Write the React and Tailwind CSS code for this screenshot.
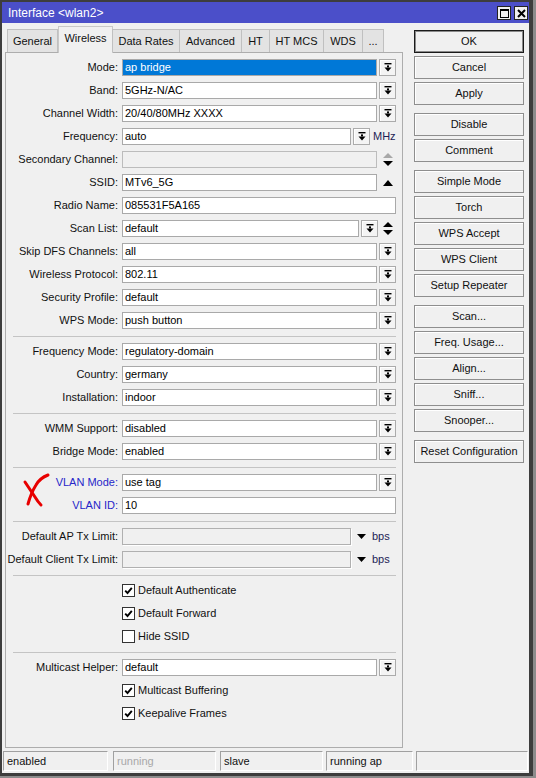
import React from "react";

const DropIcon = () => (
    <svg width="8" height="9" viewBox="0 0 8 9">
        <rect x="0.5" y="0" width="7" height="1.4" fill="#000" />
        <rect x="3" y="2.4" width="2" height="2" fill="#000" />
        <polygon points="0.5,4.4 7.5,4.4 4,8.4" fill="#000" />
    </svg>
);

const UpDown = ({ upColor = "#000" }) => (
    <svg width="10" height="13" viewBox="0 0 10 13">
        <polygon points="0,5 10,5 5,0" fill={upColor} />
        <polygon points="0,8 10,8 5,13" fill="#000" />
    </svg>
);

const Check = ({ on }) => (
    <div className="w-[13px] h-[13px] bg-white border border-[#333] flex items-center justify-center">
        {on && (
            <svg width="9" height="9" viewBox="0 0 9 9">
                <path d="M1.2 4.6 L3.5 7 L7.8 1.8" stroke="#000" strokeWidth="1.9" fill="none" />
            </svg>
        )}
    </div>
);

const Row = ({ label, blue, children }) => (
    <div className="flex items-center h-[23px]">
        <div className={`w-[116px] pr-[4px] text-right whitespace-nowrap ${blue ? "text-[#2626c9]" : "text-[#111]"}`}>
            {label}:
        </div>
        {children}
    </div>
);

const Drop = () => (
    <div className="ml-[2px] w-[17px] h-[17px] border border-[#ababab] bg-[#f4f4f4] shadow-[inset_1px_1px_0_#fff] flex items-center justify-center">
        <DropIcon />
    </div>
);

const Select = ({ value, sel }) => (
    <>
        <div className={`w-[255px] h-[17px] border border-[#a9a9a9] flex items-center px-[2px] ${sel ? "bg-[#0078d7] text-white" : "bg-white"}`}>
            {value}
        </div>
        <Drop />
    </>
);

const Separator = () => (
    <div className="mt-[4px] mb-[3px] ml-[7px] mr-[6px] border-t border-[#c4c4c4]" />
);

const CheckRow = ({ label, on }) => (
    <div className="flex items-center h-[23px]">
        <div className="w-[116px]" />
        <Check on={on} />
        <span className="ml-[3px] text-[#111]">{label}</span>
    </div>
);

const Btn = ({ children, primary, extra }) => (
    <div
        className={`h-[23px] flex items-center justify-center text-[#111] bg-[#f0f0f0] ${extra ? "mt-[8px]" : "mt-[3px]"} ${
            primary
                ? "border border-[#1a1a1a] shadow-[inset_0_0_0_1px_#8a8a8a]"
                : "border border-[#8e8e8e] shadow-[inset_1px_1px_0_#fff]"
        }`}
    >
        {children}
    </div>
);

const tabs = [
    { name: "General", w: "w-[51px]" },
    { name: "Wireless", w: "w-[55px]", active: true },
    { name: "Data Rates", w: "w-[68px]" },
    { name: "Advanced", w: "w-[63px]" },
    { name: "HT", w: "w-[29px]" },
    { name: "HT MCS", w: "w-[55px]" },
    { name: "WDS", w: "w-[40px]" },
    { name: "...", w: "w-[22px]" },
];

const status = [
    { text: "enabled", w: "w-[105px] ml-[1px]" },
    { text: "running", w: "w-[103px] ml-[5px]", dim: true },
    { text: "slave", w: "w-[103px] ml-[4px]" },
    { text: "running ap", w: "w-[87px] ml-[3px]" },
    { text: "", w: "w-[112px] ml-[3px]" },
];

export default function App() {
    return (
        <div className="w-[536px] h-[778px] bg-[#8c8c8c] font-['Liberation_Sans',Arial,sans-serif] text-[11px] leading-none">
            <div className="w-[533px] bg-[#f0f0f0] border-l-2 border-t-2 border-r-[4px] border-b-[3px] border-[#3d3d3d]">
                {/* title bar */}
                <div className="h-[21px] bg-[#4b4fc9] flex items-center pl-[6px] pr-[1px] pt-[1px]">
                    <span className="text-white text-[12px]">Interface &lt;wlan2&gt;</span>
                    <div className="ml-auto flex gap-[3px]">
                        <div className="w-[14px] h-[14px] bg-[#f0f0f0] border border-[#222] flex items-center justify-center">
                            <div className="w-[9px] h-[9px] border border-black border-t-2" />
                        </div>
                        <div className="w-[14px] h-[14px] bg-[#f0f0f0] border border-[#222] flex items-center justify-center">
                            <svg width="9" height="9" viewBox="0 0 9 9">
                                <path d="M1 1 L8 8 M8 1 L1 8" stroke="#000" strokeWidth="2" />
                            </svg>
                        </div>
                    </div>
                </div>

                <div className="flex items-start">
                    {/* left */}
                    <div className="ml-[3px] pt-[3px] w-[398px]">
                        <div className="flex items-end h-[26px] pl-[2px] relative z-10">
                            {tabs.map(t => (
                                <div
                                    key={t.name}
                                    className={`${t.w} flex items-center justify-center text-[#111] ${
                                        t.active
                                            ? "h-[27px] -mb-[1px] bg-[#f0f0f0] border border-b-0 border-[#c8c8c8] pb-[3px]"
                                            : "h-[23px] bg-[#e3e3e3] border border-b-0 border-[#c0c0c0] -ml-[1px] first:ml-0"
                                    }`}
                                >
                                    {t.name}
                                </div>
                            ))}
                        </div>
                        <div className="relative h-[696px] border border-[#adadad] pt-[3px]">
                            <Row label="Mode"><Select value="ap bridge" sel /></Row>
                            <Row label="Band"><Select value="5GHz-N/AC" /></Row>
                            <Row label="Channel Width"><Select value="20/40/80MHz XXXX" /></Row>
                            <Row label="Frequency">
                                <div className="w-[229px] h-[17px] border border-[#a9a9a9] bg-white flex items-center px-[2px]">auto</div>
                                <Drop />
                                <span className="ml-[3px] text-[#1d1d55]">MHz</span>
                            </Row>
                            <Row label="Secondary Channel">
                                <div className="w-[255px] h-[17px] border border-[#bcbcbc] bg-[#f0f0f0]" />
                                <div className="ml-[6px]"><UpDown upColor="#a8a8a8" /></div>
                            </Row>
                            <Row label="SSID">
                                <div className="w-[255px] h-[17px] border border-[#a9a9a9] bg-white flex items-center px-[2px]">MTv6_5G</div>
                                <svg className="ml-[6px]" width="10" height="6" viewBox="0 0 10 6">
                                    <polygon points="0,6 10,6 5,0" fill="#000" />
                                </svg>
                            </Row>
                            <Row label="Radio Name">
                                <div className="w-[274px] h-[17px] border border-[#a9a9a9] bg-white flex items-center px-[2px]">085531F5A165</div>
                            </Row>
                            <Row label="Scan List">
                                <div className="w-[237px] h-[17px] border border-[#a9a9a9] bg-white flex items-center px-[2px]">default</div>
                                <Drop />
                                <div className="ml-[5px]"><UpDown /></div>
                            </Row>
                            <Row label="Skip DFS Channels"><Select value="all" /></Row>
                            <Row label="Wireless Protocol"><Select value="802.11" /></Row>
                            <Row label="Security Profile"><Select value="default" /></Row>
                            <Row label="WPS Mode"><Select value="push button" /></Row>
                            <Separator />
                            <Row label="Frequency Mode"><Select value="regulatory-domain" /></Row>
                            <Row label="Country"><Select value="germany" /></Row>
                            <Row label="Installation"><Select value="indoor" /></Row>
                            <Separator />
                            <Row label="WMM Support"><Select value="disabled" /></Row>
                            <Row label="Bridge Mode"><Select value="enabled" /></Row>
                            <Separator />
                            <Row label="VLAN Mode" blue><Select value="use tag" /></Row>
                            <Row label="VLAN ID" blue>
                                <div className="w-[274px] h-[17px] border border-[#a9a9a9] bg-white flex items-center px-[2px]">10</div>
                            </Row>
                            <Separator />
                            <Row label="Default AP Tx Limit">
                                <div className="w-[229px] h-[17px] border border-[#b0b0b0] bg-[#f0f0f0] shadow-[1px_1px_0_#fff]" />
                                <svg className="ml-[6px]" width="9" height="5" viewBox="0 0 9 5">
                                    <polygon points="0,0 9,0 4.5,5" fill="#000" />
                                </svg>
                                <span className="ml-[6px] text-[#1d1d55]">bps</span>
                            </Row>
                            <Row label="Default Client Tx Limit">
                                <div className="w-[229px] h-[17px] border border-[#b0b0b0] bg-[#f0f0f0] shadow-[1px_1px_0_#fff]" />
                                <svg className="ml-[6px]" width="9" height="5" viewBox="0 0 9 5">
                                    <polygon points="0,0 9,0 4.5,5" fill="#000" />
                                </svg>
                                <span className="ml-[6px] text-[#1d1d55]">bps</span>
                            </Row>
                            <Separator />
                            <CheckRow label="Default Authenticate" on />
                            <CheckRow label="Default Forward" on />
                            <CheckRow label="Hide SSID" />
                            <Separator />
                            <Row label="Multicast Helper"><Select value="default" /></Row>
                            <CheckRow label="Multicast Buffering" on />
                            <CheckRow label="Keepalive Frames" on />

                            {/* hand-drawn red mark */}
                            <svg className="absolute left-[16px] top-[420px]" width="28" height="35" viewBox="0 0 28 35">
                                <path d="M26 2 Q18 5 14 12 Q9 20 6 31" stroke="#e80000" strokeWidth="3" fill="none" strokeLinecap="round" />
                                <path d="M3 9 Q9 18 13 24 Q16 29 19 32" stroke="#e80000" strokeWidth="3" fill="none" strokeLinecap="round" />
                            </svg>
                        </div>
                    </div>

                    {/* right buttons */}
                    <div className="ml-[11px] w-[110px] pt-[4px]">
                        <Btn primary>OK</Btn>
                        <Btn>Cancel</Btn>
                        <Btn>Apply</Btn>
                        <Btn extra>Disable</Btn>
                        <Btn>Comment</Btn>
                        <Btn extra>Simple Mode</Btn>
                        <Btn>Torch</Btn>
                        <Btn>WPS Accept</Btn>
                        <Btn>WPS Client</Btn>
                        <Btn>Setup Repeater</Btn>
                        <Btn extra>Scan...</Btn>
                        <Btn>Freq. Usage...</Btn>
                        <Btn>Align...</Btn>
                        <Btn>Sniff...</Btn>
                        <Btn>Snooper...</Btn>
                        <Btn extra>Reset Configuration</Btn>
                    </div>
                </div>

                {/* status bar */}
                <div className="flex mt-[3px] pb-[2px]">
                    {status.map((s, i) => (
                        <div
                            key={i}
                            className={`${s.w} h-[20px] flex items-center pl-[3px] border border-t-[#a0a0a0] border-l-[#a0a0a0] border-b-white border-r-white ${
                                s.dim ? "text-[#a8a8a8]" : "text-[#111]"
                            }`}
                        >
                            {s.text}
                        </div>
                    ))}
                </div>
            </div>
        </div>
    );
}
